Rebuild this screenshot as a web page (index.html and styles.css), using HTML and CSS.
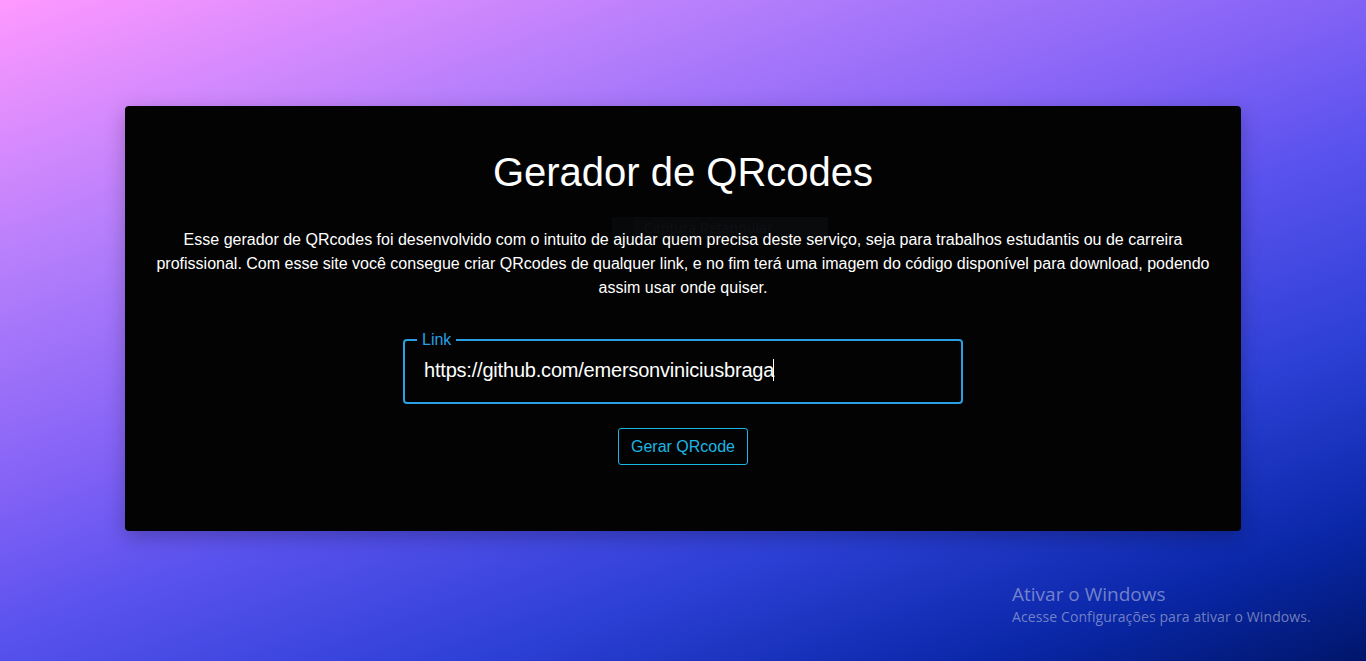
FILE: index.html
```html
<!DOCTYPE html>
<html lang="pt-BR">
<head>
<meta charset="utf-8">
<title>Gerador de QRcodes</title>
<link rel="stylesheet" href="styles.css">
</head>
<body>
<main class="page">
  <section class="card">
    <div class="snip-tip"><span class="snip-icon"></span>Captura Retangular</div>
    <h1 class="title">Gerador de QRcodes</h1>
    <p class="intro">Esse gerador de QRcodes foi desenvolvido com o intuito de ajudar quem precisa deste serviço, seja para trabalhos estudantis ou de carreira profissional. Com esse site você consegue criar QRcodes de qualquer link, e no fim terá uma imagem do código disponível para download, podendo assim usar onde quiser.</p>
    <form class="form">
      <fieldset class="field">
        <legend class="field-label">Link</legend>
        <div class="field-row">
          <input class="field-input" type="text" value="https://github.com/emersonviniciusbraga"><span class="caret"></span>
        </div>
      </fieldset>
      <button type="button" class="btn">Gerar QRcode</button>
    </form>
  </section>
</main>
<div class="watermark">
  <div class="wm-title">Ativar o Windows</div>
  <div class="wm-sub">Acesse Configurações para ativar o Windows.</div>
</div>
</body>
</html>
```
FILE: styles.css
```css
html, body {
  margin: 0;
  height: 100%;
}
body {
  width: 1366px;
  height: 661px;
  overflow: hidden;
  position: relative;
  font-family: "Liberation Sans", Arial, sans-serif;
  background: linear-gradient(160deg, #ff99ff 0%, #b07cfb 25%, #8563f6 42%, #5a52ee 55%, #2d40d6 72%, #0a27a8 88%, #00166b 100%);
}
.page {
  padding-top: 106px;
}
.card {
  position: relative;
  width: 1116px;
  margin: 0 auto;
  box-sizing: border-box;
  background: #030303;
  border-radius: 4px;
  padding: 43px 30px 66px;
  box-shadow: 0 6px 20px rgba(0, 0, 0, 0.25);
  color: #fff;
  text-align: center;
}
.title,
.intro,
.form {
  position: relative;
}
.title {
  margin: 0;
  font-weight: 400;
  font-size: 40px;
  line-height: 46px;
}
.intro {
  margin: 33px 0 0;
  font-size: 16px;
  line-height: 24px;
}
.form {
  display: flex;
  flex-direction: column;
  align-items: center;
  margin-top: 31px;
}
.field {
  width: 560px;
  box-sizing: border-box;
  margin: 0;
  border: 2px solid #2a9fe2;
  border-radius: 4px;
  padding: 0 12px 11px;
  text-align: left;
}
.field-label {
  padding: 0 5px;
  font-size: 16px;
  line-height: 18px;
  color: #2a9fe2;
}
.field-row {
  display: flex;
  align-items: center;
  height: 42px;
}
.field-input {
  width: 352px;
  flex: none;
  background: transparent;
  border: 0;
  outline: none;
  padding: 0 0 0 7px;
  color: #fff;
  font-family: "Liberation Sans", Arial, sans-serif;
  font-size: 20px;
  line-height: 24px;
  letter-spacing: -0.2px;
}
.caret {
  width: 1px;
  height: 22px;
  background: #fff;
  margin-left: -3px;
}
.btn {
  margin-top: 24px;
  width: 130px;
  height: 37px;
  background: transparent;
  border: 1px solid #1cb6e4;
  border-radius: 3px;
  color: #1cb6e4;
  font-family: "Liberation Sans", Arial, sans-serif;
  font-size: 16px;
  cursor: pointer;
}
.snip-tip {
  position: absolute;
  left: 487px;
  top: 111px;
  width: 216px;
  height: 22px;
  background: #090a0c;
  color: #0f1013;
  font-family: "Noto Sans", sans-serif;
  font-size: 14px;
  line-height: 22px;
  text-align: left;
  display: flex;
  align-items: center;
  gap: 10px;
}
.snip-icon {
  width: 22px;
  height: 22px;
  background: #070809;
}
.watermark {
  position: absolute;
  left: 1012px;
  top: 582px;
  color: rgba(180, 188, 218, 0.62);
  font-family: "Open Sans", "Noto Sans", sans-serif;
}
.wm-title {
  font-size: 19px;
  line-height: 25px;
}
.wm-sub {
  font-size: 14px;
  line-height: 20px;
  letter-spacing: 0.1px;
}
```
